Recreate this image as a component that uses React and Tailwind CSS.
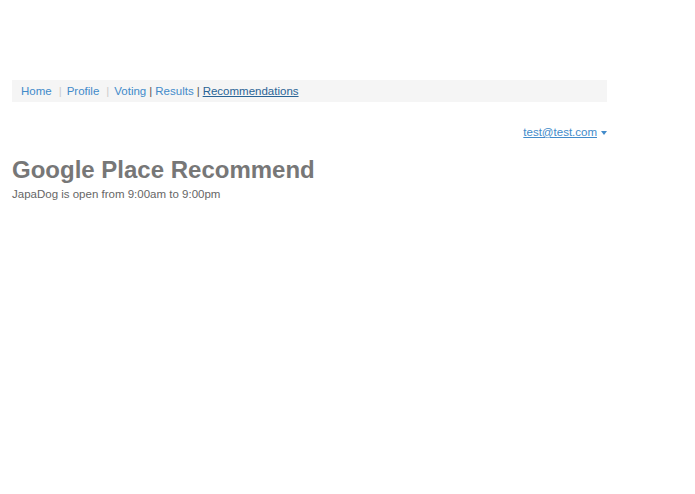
import React from 'react';

export default function App() {
  return (
    <div className="min-h-screen bg-white font-['Liberation_Sans',Arial,sans-serif] text-[11.5px] text-[#555]">
      <div className="pt-[80px] pl-[12px] w-[607px]">
        {/* top nav */}
        <div className="h-[22px] bg-[#f5f5f5] pl-[9px] pt-[2px] flex items-center leading-none">
          <a href="#" className="text-[#428bca]">Home</a>
          <span className="text-[#ccc] ml-[7px] mr-[5px]">|</span>
          <a href="#" className="text-[#428bca]">Profile</a>
          <span className="text-[#ccc] ml-[7px] mr-[5px]">|</span>
          <a href="#" className="text-[#428bca]">Voting</a>
          <span className="text-[#555] mx-[3px]">|</span>
          <a href="#" className="text-[#428bca]">Results</a>
          <span className="text-[#555] mx-[3px]">|</span>
          <a href="#" className="text-[#2a6496] underline">Recommendations</a>
        </div>

        <div className="flex justify-end mt-[22px]">
          <a href="#" className="text-[#428bca] underline flex items-center gap-[4px]">
            test@test.com
            <span className="w-0 h-0 border-l-[3px] border-r-[3px] border-t-[4px] border-l-transparent border-r-transparent border-t-[#428bca]" />
          </a>
        </div>

        <h1 className="mt-[15px] text-[24px] font-bold text-[#777] leading-[28px]">Google Place Recommend</h1>
        <p className="mt-[2px] text-[11.5px] text-[#666] leading-[16px]">JapaDog is open from 9:00am to 9:00pm</p>
      </div>
    </div>
  );
}
